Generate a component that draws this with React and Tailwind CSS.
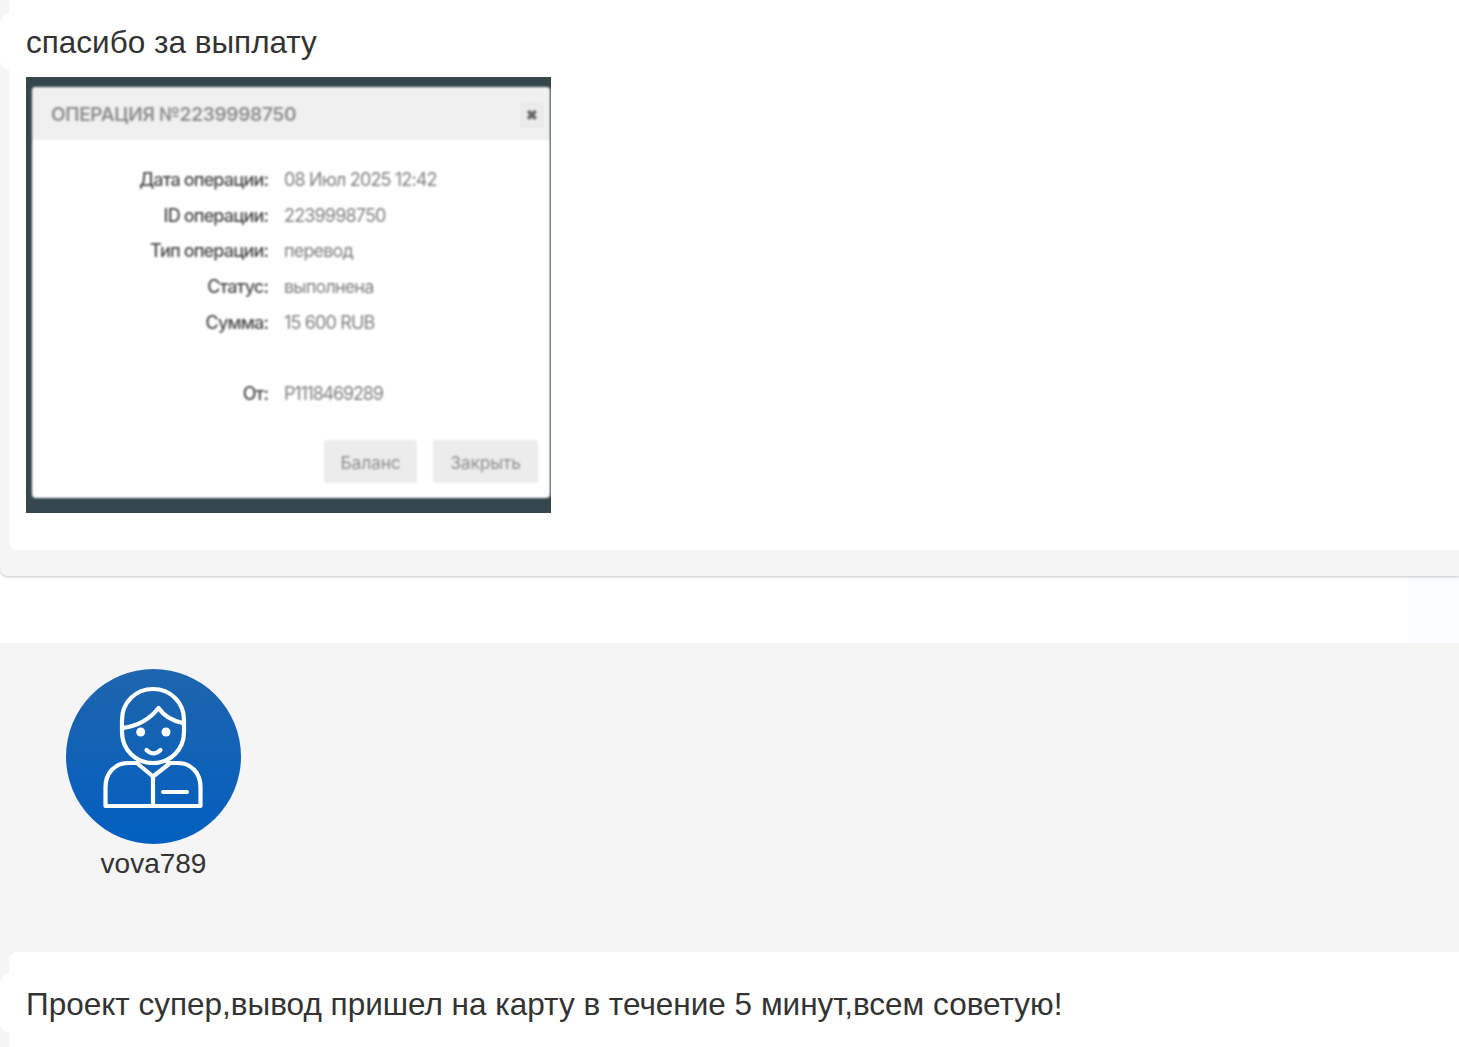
import React from 'react';

const rows = [
  { label: 'Дата операции:', value: '08 Июл 2025 12:42' },
  { label: 'ID операции:', value: '2239998750' },
  { label: 'Тип операции:', value: 'перевод' },
  { label: 'Статус:', value: 'выполнена' },
  { label: 'Сумма:', value: '15 600 RUB' },
];

function UserIcon() {
  return (
    <svg viewBox="0 0 175 175" className="w-[175px] h-[175px]">
      <defs>
        <linearGradient id="avatarBg" x1="0" y1="0" x2="0" y2="1">
          <stop offset="0" stopColor="#1e65ad" />
          <stop offset="1" stopColor="#035fc0" />
        </linearGradient>
      </defs>
      <circle cx="87.5" cy="87.5" r="87.5" fill="url(#avatarBg)" />
      <g fill="none" stroke="#fff" strokeWidth="4.2" strokeLinecap="round" strokeLinejoin="round">
        <path d="M56 51 C56 33 70 20 87 20 C104 20 118 33 118 51 V63 C118 81 104 94 87 94 C70 94 56 81 56 63 Z" />
        <path d="M57 59 C71 57 84 50 92.5 39 C98 47 107 52 117 54" />
        <path d="M80.5 81 C85 85.5 90 85.5 94.5 81" />
        <path d="M72 95 L87 107.5 L103 95" />
        <path d="M72 94 H62 C49 94 39.5 104 39.5 118 V137 H134.5 V118 C134.5 104 125 94 112 94 H102" />
        <path d="M87 107.5 V137" />
        <path d="M97 123 H121" />
      </g>
      <circle cx="74.7" cy="63" r="4.5" fill="#fff" />
      <circle cx="100" cy="63" r="4.5" fill="#fff" />
    </svg>
  );
}

function OperationShot() {
  return (
    <div className="w-[525px] h-[436px] bg-[#35474c] pt-[10px] px-[6px] pb-[15px] shrink-0">
      <div className="h-full w-[518px] bg-white rounded-[4px] flex flex-col blur-[0.8px] font-['Inter',sans-serif]">
        <div className="h-[53px] bg-[#f0f0f0] rounded-t-[4px] flex items-center justify-between pl-[19px] pr-[7px]">
          <span className="text-[19px] pt-[4px] font-semibold tracking-[-0.3px] text-[#8d8d8d]">ОПЕРАЦИЯ №2239998750</span>
          <span className="w-[22px] h-[24px] mt-[2px] rounded-[3px] bg-[#ececec] border border-[#e2e2e2] flex items-center justify-center text-[14px] font-bold text-[#666]">✖</span>
        </div>
        <div className="pt-[22px] flex flex-col">
          {rows.map(row => (
            <div key={row.label} className="flex h-[35.6px] items-center text-[18px] tracking-[-0.85px]">
              <span className="w-[236px] text-right font-medium text-[#4a4a4a]">{row.label}</span>
              <span className="ml-[16px] text-[#808080]">{row.value}</span>
            </div>
          ))}
          <div className="flex h-[35.6px] mt-[36px] items-center text-[18px] tracking-[-0.85px]">
            <span className="w-[236px] text-right font-medium text-[#4a4a4a]">От:</span>
            <span className="ml-[16px] text-[#808080] tracking-[-1.2px]">P1118469289</span>
          </div>
        </div>
        <div className="flex justify-end gap-[16px] pr-[12px] mt-[28px]">
          <span className="w-[93px] h-[43px] pt-[4px] rounded-[3px] bg-[#ececec] flex items-center justify-center text-[17.5px] tracking-[-0.2px] text-[#8f8f8f]">Баланс</span>
          <span className="w-[105px] h-[43px] pt-[4px] rounded-[3px] bg-[#ececec] flex items-center justify-center text-[17.5px] tracking-[-0.2px] text-[#8f8f8f]">Закрыть</span>
        </div>
      </div>
    </div>
  );
}

export default function App() {
  return (
    <div className="w-[1459px] h-[1047px] overflow-hidden bg-white font-['Liberation_Sans',Arial,sans-serif] text-[#333]">
      {/* first review, author block is scrolled off */}
      <section className="h-[576px] bg-[#f5f5f5] rounded-bl-[8px] shadow-[0_1px_3px_rgba(0,0,30,0.22)] pl-[9px] relative">
        <div className="absolute left-0 top-[13px] w-[12px] h-[57px] bg-white rounded-l-[10px]" />
        <div className="h-[550px] bg-white rounded-bl-[8px] pl-[17px] relative">
          <p className="text-[31.5px] leading-[36px] pt-[24px] h-[77px]">спасибо за выплату</p>
          <OperationShot />
        </div>
      </section>

      <div className="h-[67px] flex justify-end">
        <div className="w-[51px] bg-[#fbfcff]" />
      </div>

      <section className="h-[404px] bg-[#f5f5f5] pl-[9px] relative">
        <div className="pt-[26px] pl-[57px] w-[232px] h-[309px]">
          <UserIcon />
          <p className="w-[175px] text-center text-[28px] leading-[34px] mt-[3px]">vova789</p>
        </div>
        <div className="absolute left-0 top-[330px] w-[12px] h-[60px] bg-white rounded-l-[10px]" />
        <div className="h-[95px] bg-white rounded-tl-[8px] pl-[17px] relative">
          <p className="text-[31.5px] leading-[36px] pt-[34px]">Проект супер,вывод пришел на карту в течение 5 минут,всем советую!</p>
        </div>
      </section>
    </div>
  );
}
